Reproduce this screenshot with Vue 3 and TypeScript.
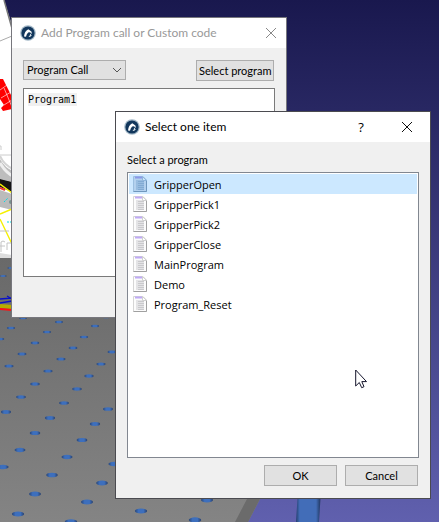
<script setup lang="ts">
import { ref } from 'vue'

const programs: string[] = ['GripperOpen', 'GripperPick1', 'GripperPick2', 'GripperClose', 'MainProgram', 'Demo', 'Program_Reset']
const selected = ref('GripperOpen')
const callType = ref('Program Call')
const code = ref('Program1')

// Centres of the holes in the table surface
const holes: [number, number][] = [
  [23, 318], [106, 317], [59, 322], [95, 326], [11, 328], [47, 332], [84, 337], [0, 339], [35, 343], [73, 348],
  [112, 352], [22, 354], [61, 359], [101, 364], [9, 366], [48, 371], [89, 376], [35, 384], [77, 389],
  [21, 397], [64, 403], [108, 409], [6, 412], [50, 418], [95, 424], [35, 433], [82, 440], [20, 450],
  [67, 457], [3, 467], [114, 464], [52, 475], [102, 483], [35, 494], [87, 502], [18, 514], [71, 522],
  [207, 500], [141, 511], [195, 520], [3, 276], [11, 268]
]
const rx = (y: number): number => 3.8 + (y - 300) * 0.011
const ry = (y: number): number => 1.1 + (y - 300) * 0.007
</script>

<template>
  <main class="desktop">
    <svg class="scene" viewBox="0 0 439 522" preserveAspectRatio="xMinYMin slice" aria-hidden="true">
      <defs>
        <linearGradient id="sky" x1="0" y1="0" x2="0" y2="1">
          <stop offset="0" stop-color="#19184e" />
          <stop offset="1" stop-color="#6060ae" />
        </linearGradient>
        <linearGradient id="floor" x1="0" y1="0" x2="0" y2="1">
          <stop offset="0" stop-color="#696969" />
          <stop offset="1" stop-color="#848484" />
        </linearGradient>
        <linearGradient id="hole">
          <stop offset="0" stop-color="#284577" />
          <stop offset=".3" stop-color="#3d6fbd" />
          <stop offset=".7" stop-color="#3d6fbd" />
          <stop offset="1" stop-color="#263f6d" />
        </linearGradient>
        <linearGradient id="post">
          <stop offset="0" stop-color="#243f6e" />
          <stop offset=".15" stop-color="#426db8" />
          <stop offset=".8" stop-color="#426db8" />
          <stop offset="1" stop-color="#1d3157" />
        </linearGradient>
      </defs>
      <rect width="439" height="522" fill="url(#sky)" />
      <path d="M0 0H4L14 32V265H0Z" fill="#fff" />
      <path d="M4 0L13 32" stroke="#777" stroke-width="1.5" />
      <path d="M0 41L12 36" stroke="#aaa" />
      <path d="M0 79H3L12 97V109L3 111L1 108L4 105L0 99Z" fill="#f00" />
      <path d="M0 90L7 85M1 98L11 92M4 105L12 100M4 88L12 107" stroke="#fff" stroke-width=".6" />
      <path d="M0 146H1V150M0 155H12" fill="none" stroke="#ccc" />
      <path d="M0 159Q5 168 13 171V182L0 179Z" fill="#bdbdbd" />
      <path d="M0 156Q4 165 13 169" fill="none" stroke="#d4d4d4" stroke-width="2" />
      <path d="M0 163Q6 173 13 176" fill="none" stroke="#eee" stroke-width="3" />
      <path d="M0 179L12 182V192L0 187Z" fill="#141414" />
      <path d="M0 190L12 194V210L0 207Z" fill="#bbb" />
      <path d="M0 188L5 190" stroke="#e33" stroke-width="2" />
      <path d="M0 184L12 193M0 214L12 209M0 219L12 244" fill="none" stroke="#f5f000" stroke-width="1.4" />
      <circle cx="11" cy="202" r="2" fill="#77908e" />
      <path d="M7 222H12M4 202L8 198" stroke="#00dce8" stroke-dasharray="2 1" />
      <path d="M0 253L12 255V259H0Z" fill="#ddd" />
      <path d="M1 252V242Q3 240 5 242M0 246H5M7 250V243H11M0 231H9" fill="none" stroke="#c4c4c4" />
      <path d="M0 258H150L290 440L260 499L248 522H0Z" fill="url(#floor)" />
      <path d="M272 440L290 440L260 499L248 522H235L247 499Z" fill="#6b6b6b" />
      <path d="M0 299L12 298M0 303L12 301M7 296L12 299" stroke="#0910c8" stroke-width="1.3" />
      <path d="M0 306L12 307" stroke="#b7ad00" stroke-width="4" />
      <path d="M0 309L12 310" stroke="#f11" stroke-width="2" />
      <ellipse v-for="([x, y], i) in holes" :key="i" :cx="x" :cy="y" :rx="rx(y)" :ry="ry(y)" fill="url(#hole)" />
      <path d="M298 490H321L319 522H296Z" fill="url(#post)" />
    </svg>

    <section class="window code-window" aria-label="Add Program call or Custom code">
      <header class="titlebar">
        <svg class="logo" viewBox="0 0 16 16" aria-hidden="true">
          <circle cx="8" cy="8" r="7.8" fill="#a3b8c7" />
          <circle cx="8" cy="8" r="6.6" fill="#12375c" />
          <path d="M4 11.6Q4.4 6.2 8.3 4.2L11.4 6.6L12 9L10.2 7.4Q9 6.8 8.2 7.6Q6.6 9 6 11.8Z" fill="#fff" />
          <path d="M8.5 11.8Q10.2 10.8 10.2 8.6L11.7 10.6Q10.6 12.2 8.5 11.8Z" fill="#dbe4ea" />
        </svg>
        <h1>Add Program call or Custom code</h1>
        <button class="caption" type="button" aria-label="Close">
          <svg viewBox="0 0 12 12"><path d="M1 1L11 11M11 1L1 11" /></svg>
        </button>
      </header>
      <div class="code-body">
        <div class="toolbar">
          <div class="combo">
            <select v-model="callType" aria-label="Instruction type">
              <option>Program Call</option>
            </select>
            <svg viewBox="0 0 10 6" aria-hidden="true"><path d="M1 1L5 5L9 1" /></svg>
          </div>
          <button class="push" type="button">Select program</button>
        </div>
        <textarea v-model="code" aria-label="Code" spellcheck="false"></textarea>
      </div>
    </section>

    <section class="window picker" role="dialog" aria-label="Select one item">
      <header class="titlebar">
        <svg class="logo" viewBox="0 0 16 16" aria-hidden="true">
          <circle cx="8" cy="8" r="7.8" fill="#a3b8c7" />
          <circle cx="8" cy="8" r="6.6" fill="#12375c" />
          <path d="M4 11.6Q4.4 6.2 8.3 4.2L11.4 6.6L12 9L10.2 7.4Q9 6.8 8.2 7.6Q6.6 9 6 11.8Z" fill="#fff" />
          <path d="M8.5 11.8Q10.2 10.8 10.2 8.6L11.7 10.6Q10.6 12.2 8.5 11.8Z" fill="#dbe4ea" />
        </svg>
        <h2>Select one item</h2>
        <button class="caption help" type="button" aria-label="Help">?</button>
        <button class="caption" type="button" aria-label="Close">
          <svg viewBox="0 0 12 12"><path d="M1 1L11 11M11 1L1 11" /></svg>
        </button>
      </header>
      <div class="picker-body">
        <p id="list-label">Select a program</p>
        <ul class="list" aria-labelledby="list-label">
          <li v-for="name in programs" :key="name">
            <button type="button" :class="{ active: name === selected }" :aria-pressed="name === selected" @click="selected = name">
              <svg class="doc" viewBox="0 0 14 16" aria-hidden="true">
                <path class="sheet" d="M.5.5H10L13.5 4V15.5H.5Z" />
                <path class="edge" d="M13.5 4V15.5H.5" />
                <path class="block" d="M3 4H11V14H3Z" />
                <path class="text" d="M5 5.5H11M5 7.5H11M5 9.5H11M5 11.5H11M5 13.5H11" />
                <path class="fold" d="M9.5 .5V4.5H13.5Z" />
                <path class="head" d="M2 1.5H9" />
              </svg>
              <span>{{ name }}</span>
            </button>
          </li>
        </ul>
        <div class="actions">
          <button class="push" type="button">OK</button>
          <button class="push" type="button">Cancel</button>
        </div>
      </div>
    </section>

    <svg class="pointer" viewBox="0 0 12 20" aria-hidden="true">
      <path d="M.7 1V17L4.3 13.5L6.7 18.7L9 17.7L6.8 12.6H11.5Z" fill="#fff" stroke="#15152c" />
    </svg>
  </main>
</template>

<style>
body {
  margin: 0;
}
</style>

<style scoped>
.desktop {
  position: relative;
  min-height: 100vh;
  overflow: hidden;
  font-family: Lato, "Open Sans", sans-serif;
  font-size: 12px;
  line-height: 16px;
  color: #000;
}
.desktop * {
  box-sizing: border-box;
}
.scene {
  position: absolute;
  inset: 0;
  width: 100%;
  height: 100%;
}
.window {
  position: absolute;
  display: flex;
  flex-direction: column;
  background: #f0f0f0;
  border: 1px solid #4b4b50;
}
.code-window {
  left: 11px;
  top: 17px;
  width: 276px;
  height: 301px;
  border-color: #77777d;
}
.picker {
  left: 115px;
  top: 111px;
  width: 316px;
  height: 388px;
}
.titlebar {
  display: flex;
  align-items: center;
  flex: none;
  height: 30px;
  padding-left: 8px;
  background: #fff;
}
.logo {
  width: 16px;
  height: 16px;
  margin-right: 5px;
}
h1, h2 {
  flex: 1;
  margin: 0;
  font-size: 12px;
  font-weight: 400;
  white-space: nowrap;
}
h1 {
  color: #999;
}
button, select, textarea {
  font: inherit;
  color: inherit;
}
.caption {
  display: flex;
  align-items: center;
  justify-content: center;
  width: 46px;
  height: 30px;
  padding: 0;
  border: 0;
  background: none;
}
.code-window .caption {
  width: 30px;
}
.caption svg {
  width: 12px;
  height: 12px;
  stroke: #111;
}
.code-window .caption svg {
  stroke: #888;
}
.help {
  font-family: "Open Sans", sans-serif;
  font-size: 13px;
}
.code-body {
  display: flex;
  flex-direction: column;
  flex: 1;
  gap: 7px;
  padding: 12px 11px 40px;
}
.toolbar {
  display: flex;
  justify-content: space-between;
  padding-right: 1px;
}
.combo {
  position: relative;
  width: 103px;
}
.combo select {
  appearance: none;
  width: 100%;
  height: 20px;
  padding: 0 3px;
  border: 1px solid #adadad;
  border-radius: 0;
  background: #e1e1e1;
  font-size: 11px;
}
.combo svg {
  position: absolute;
  right: 4px;
  top: 7px;
  width: 10px;
  height: 6px;
  fill: none;
  stroke: #555;
  pointer-events: none;
}
.push {
  height: 21px;
  padding: 0 2px;
  border: 1px solid #adadad;
  background: #e1e1e1;
  font-size: 11px;
  line-height: 16px;
  white-space: nowrap;
}
.toolbar .push {
  width: 78px;
}
textarea {
  flex: 1;
  padding: 4px;
  border: 1px solid #7a7a7a;
  border-radius: 0;
  background: linear-gradient(#f0f0f0, #f0f0f0) 4px 4px / 49px 13px no-repeat #fff;
  font-family: "DejaVu Sans Mono", monospace;
  font-size: 10px;
  line-height: 13px;
  resize: none;
  outline: none;
}
.picker-body {
  display: flex;
  flex-direction: column;
  flex: 1;
  padding: 10px 11px 12px;
}
p {
  margin: 0 0 4px;
  font-size: 11px;
}
.list {
  flex: 1;
  margin: 0;
  padding: 1px;
  border: 1px solid #828790;
  background: #fff;
  list-style: none;
}
.list li {
  display: flex;
}
.list button {
  display: flex;
  align-items: center;
  flex: 1;
  gap: 7px;
  height: 20px;
  padding: 0 4px;
  border: 0;
  background: none;
  font-family: "Open Sans", "Noto Sans", sans-serif;
  font-size: 11px;
  line-height: 16px;
}
.list span {
  padding-top: 2px;
}
.list .active {
  background: #cce8ff;
}
.doc {
  width: 14px;
  height: 16px;
  fill: none;
}
.sheet {
  fill: #fcfcfc;
  stroke: #d6d6d6;
}
.edge {
  stroke: #a0a0a0;
}
.block {
  fill: #e4e4e6;
}
.fold {
  fill: #fff;
  stroke: #d0d0d0;
}
.head {
  stroke: #bfaaf5;
  stroke-width: 2;
}
.text {
  stroke: #cacacd;
}
.active .sheet {
  fill: #b3d1ee;
  stroke: #9bbfe0;
}
.active .edge {
  stroke: #6f97bd;
}
.active .block {
  fill: #98bde0;
}
.active .fold {
  fill: #cce4fa;
  stroke: #8eb5da;
}
.active .head {
  stroke: #8a98e8;
}
.active .text {
  stroke: #82abd3;
}
.actions {
  display: flex;
  justify-content: flex-end;
  gap: 8px;
  padding: 7px 1px 0 0;
}
.actions .push {
  width: 73px;
}
.pointer {
  position: absolute;
  left: 355px;
  top: 369px;
  width: 12px;
  height: 20px;
}
</style>
